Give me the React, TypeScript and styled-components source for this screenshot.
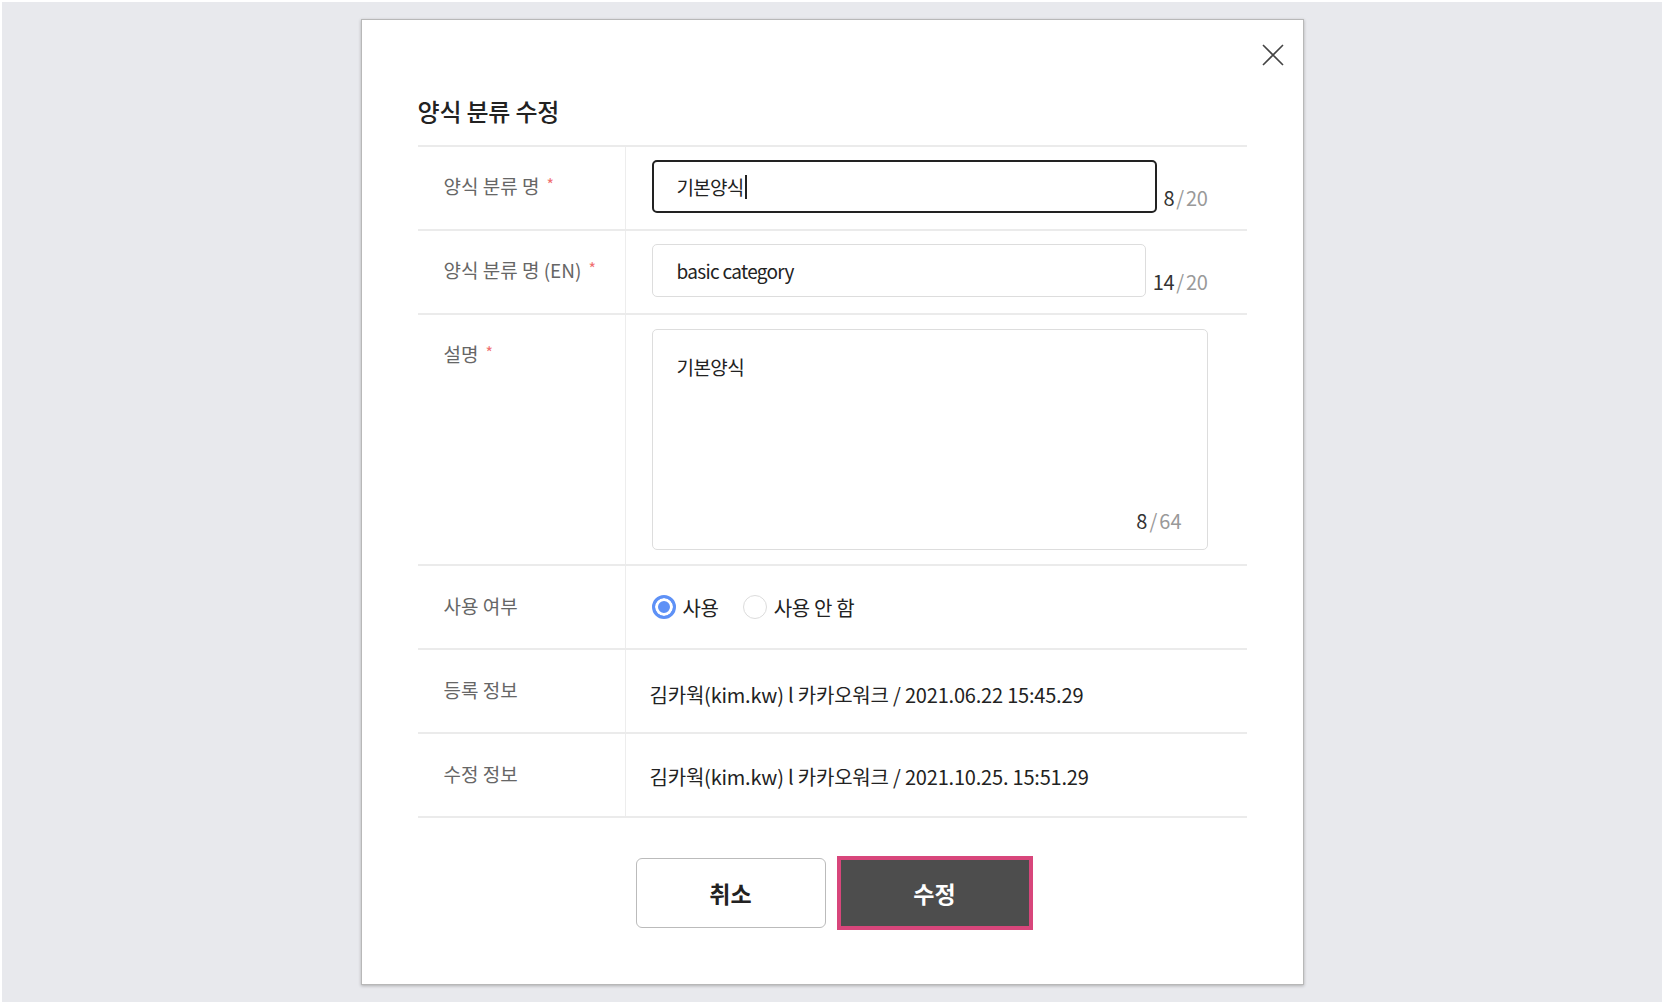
import React from "react";
import styled, { createGlobalStyle } from "styled-components";

const GlobalStyle = createGlobalStyle`
  html, body { margin: 0; padding: 0; background: #ffffff; }
  body { font-family: "Noto Sans CJK KR", "Noto Sans", sans-serif; }
  * { box-sizing: border-box; }
`;

const Page = styled.div`
  margin: 2px;
  height: 1000px;
  background: #e8e9ed;
  display: flex;
  justify-content: center;
  align-items: flex-start;
  padding-top: 17px;
`;

const Modal = styled.div`
  position: relative;
  width: 943px;
  background: #ffffff;
  border: 1px solid #b8b8b8;
  box-shadow: 0 1px 3px rgba(0, 0, 0, 0.25);
  padding: 75px 56px 56px 56px;
  display: flex;
  flex-direction: column;
`;

const CloseButton = styled.button`
  position: absolute;
  top: 23px;
  right: 18px;
  width: 24px;
  height: 24px;
  padding: 0;
  border: none;
  background: transparent;
  display: flex;
  align-items: center;
  justify-content: center;
  cursor: pointer;
`;

const Title = styled.h2`
  margin: 0 0 18px 0;
  font-size: 24px;
  line-height: 32px;
  font-weight: 500;
  color: #222222;
  letter-spacing: -0.2px;
`;

const Table = styled.div`
  border-top: 2px solid #ebebeb;
  display: flex;
  flex-direction: column;
`;

const Row = styled.div`
  display: grid;
  grid-template-columns: 208px 1fr;
  border-bottom: 2px solid #ebebeb;
`;

const LabelCell = styled.div<{ $pt?: number }>`
  border-right: 1px solid #ededed;
  padding: ${(p) => p.$pt ?? 24}px 0 0 26px;
  font-size: 19px;
  line-height: 26px;
  color: #666666;
`;

const Required = styled.span`
  color: #f07070;
  font-size: 16px;
  margin-left: 7px;
  vertical-align: 3px;
`;

const ValueCell = styled.div<{ $pt?: number; $pb?: number; $center?: boolean }>`
  padding: ${(p) => p.$pt ?? 13}px 39px ${(p) => p.$pb ?? 16}px 26px;
  min-height: 82px;
  display: flex;
  align-items: ${(p) => (p.$center ? "center" : "stretch")};
`;

const InputRow = styled.div`
  flex: 1;
  display: flex;
  align-items: flex-end;
  gap: 7px;
`;

const InputBox = styled.div<{ $focused?: boolean }>`
  flex: 1;
  height: 53px;
  border: ${(p) => (p.$focused ? "2px solid #222222" : "1px solid #dddddd")};
  border-radius: 5px;
  padding: 0 ${(p) => (p.$focused ? 23 : 24)}px;
  display: flex;
  align-items: center;
  font-size: 19px;
  color: #222222;
  letter-spacing: -0.7px;
`;

const Caret = styled.span`
  display: inline-block;
  width: 2px;
  height: 24px;
  background: #222222;
  margin-left: 1px;
`;

const Counter = styled.div<{ $pb?: number }>`
  font-size: 20px;
  line-height: 24px;
  padding-bottom: ${(p) => p.$pb ?? 3}px;
  color: #999999;
  white-space: nowrap;
  letter-spacing: -0.3px;
`;

const CountNow = styled.span`
  color: #333333;
`;

const Slash = styled.span`
  margin: 0 2px;
`;

const TextAreaBox = styled.div`
  flex: 1;
  height: 221px;
  border: 1px solid #dddddd;
  border-radius: 5px;
  padding: 24px 25px 16px 24px;
  display: flex;
  flex-direction: column;
  justify-content: space-between;
  font-size: 19px;
  line-height: 26px;
  color: #222222;
  letter-spacing: -0.6px;
`;

const TextAreaCounter = styled(Counter)`
  align-self: flex-end;
  padding-bottom: 0;
  letter-spacing: 0;
`;

const RadioGroup = styled.div`
  display: flex;
  align-items: center;
  gap: 24px;
`;

const RadioItem = styled.label`
  display: flex;
  align-items: center;
  gap: 7px;
  font-size: 20px;
  color: #222222;
  cursor: pointer;
  letter-spacing: -0.3px;
`;

const RadioCircle = styled.span<{ $checked?: boolean }>`
  width: 24px;
  height: 24px;
  border-radius: 50%;
  border: ${(p) => (p.$checked ? "3px solid #5e91f6" : "1px solid #dcdcdc")};
  background: ${(p) => (p.$checked ? "#5e91f6" : "#ffffff")};
  box-shadow: ${(p) => (p.$checked ? "inset 0 0 0 3px #ffffff" : "none")};
`;

const InfoText = styled.div`
  font-size: 20px;
  color: #222222;
  letter-spacing: -0.2px;
  margin-left: -2px;
`;

const Buttons = styled.div`
  display: flex;
  justify-content: center;
  align-items: center;
  gap: 15px;
  margin-top: 40px;
`;

const CancelButton = styled.button`
  width: 190px;
  height: 70px;
  border: 1px solid #bbbbbb;
  border-radius: 6px;
  background: #ffffff;
  font-family: inherit;
  font-size: 23px;
  font-weight: 700;
  color: #222222;
  cursor: pointer;
`;

const SubmitButton = styled.button`
  width: 188px;
  height: 66px;
  border: none;
  border-radius: 0;
  background: #4d4d4d;
  outline: 4px solid #d8467b;
  font-family: inherit;
  font-size: 23px;
  font-weight: 700;
  color: #ffffff;
  cursor: pointer;
`;

const CloseIcon = () => (
  <svg width="22" height="22" viewBox="0 0 22 22" fill="none">
    <path d="M1 1L21 21M21 1L1 21" stroke="#444444" strokeWidth="1.6" />
  </svg>
);

const Count = ({ now, max }: { now: number; max: number }) => (
  <>
    <CountNow>{now}</CountNow>
    <Slash>/</Slash>
    {max}
  </>
);

export default function App() {
  return (
    <>
      <GlobalStyle />
      <Page>
        <Modal>
          <CloseButton aria-label="닫기">
            <CloseIcon />
          </CloseButton>
          <Title>양식 분류 수정</Title>
          <Table>
            <Row>
              <LabelCell>
                양식 분류 명<Required>*</Required>
              </LabelCell>
              <ValueCell>
                <InputRow>
                  <InputBox $focused>
                    기본양식
                    <Caret />
                  </InputBox>
                  <Counter>
                    <Count now={8} max={20} />
                  </Counter>
                </InputRow>
              </ValueCell>
            </Row>
            <Row>
              <LabelCell>
                양식 분류 명 (EN)<Required>*</Required>
              </LabelCell>
              <ValueCell>
                <InputRow>
                  <InputBox>basic category</InputBox>
                  <Counter>
                    <Count now={14} max={20} />
                  </Counter>
                </InputRow>
              </ValueCell>
            </Row>
            <Row>
              <LabelCell>
                설명<Required>*</Required>
              </LabelCell>
              <ValueCell $pt={14} $pb={14}>
                <TextAreaBox>
                  <div>기본양식</div>
                  <TextAreaCounter>
                    <Count now={8} max={64} />
                  </TextAreaCounter>
                </TextAreaBox>
              </ValueCell>
            </Row>
            <Row>
              <LabelCell $pt={27}>사용 여부</LabelCell>
              <ValueCell $center $pt={0} $pb={0}>
                <RadioGroup>
                  <RadioItem>
                    <RadioCircle $checked />
                    사용
                  </RadioItem>
                  <RadioItem>
                    <RadioCircle />
                    사용 안 함
                  </RadioItem>
                </RadioGroup>
              </ValueCell>
            </Row>
            <Row>
              <LabelCell $pt={27}>등록 정보</LabelCell>
              <ValueCell $center $pt={6} $pb={0}>
                <InfoText>김카웍(kim.kw) l 카카오워크 / 2021.06.22 15:45.29</InfoText>
              </ValueCell>
            </Row>
            <Row>
              <LabelCell $pt={27}>수정 정보</LabelCell>
              <ValueCell $center $pt={2} $pb={0}>
                <InfoText>김카웍(kim.kw) l 카카오워크 / 2021.10.25. 15:51.29</InfoText>
              </ValueCell>
            </Row>
          </Table>
          <Buttons>
            <CancelButton>취소</CancelButton>
            <SubmitButton>수정</SubmitButton>
          </Buttons>
        </Modal>
      </Page>
    </>
  );
}
